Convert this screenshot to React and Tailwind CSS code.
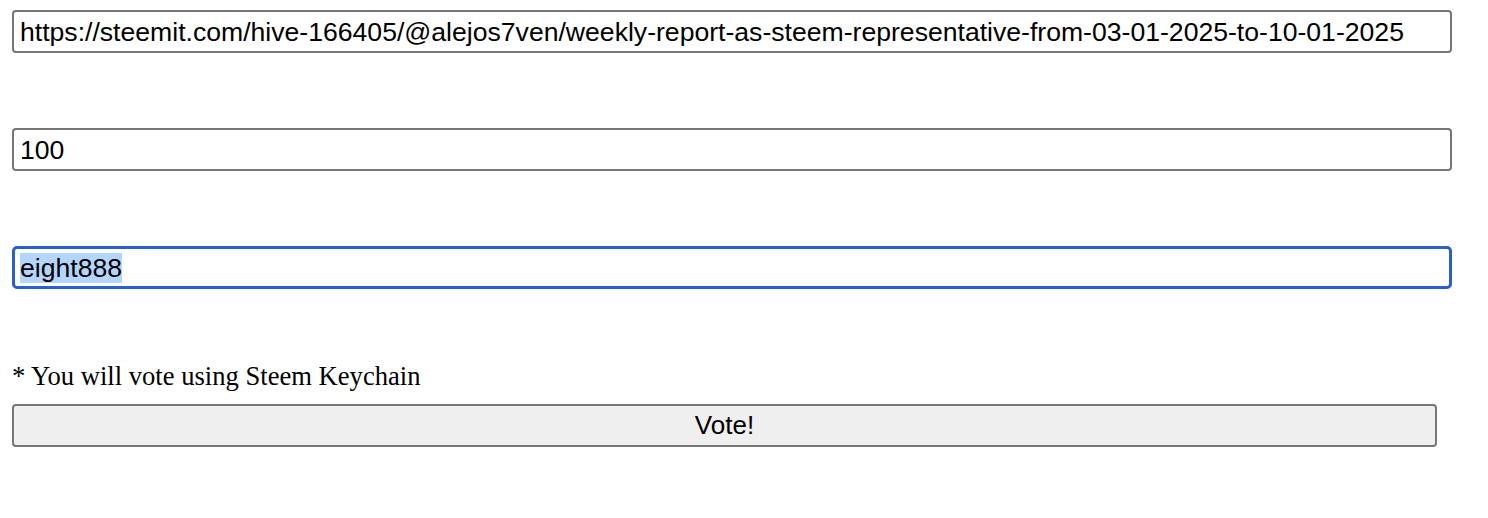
import React from "react";

export default function App() {
  return (
    <div className="min-h-[518px] bg-white pl-[12px] pt-[10px] font-['Liberation_Sans',Arial,sans-serif] text-black">
      {/* Post URL */}
      <div className="flex h-[43px] w-[1440px] items-center rounded-[4px] border-2 border-[#767676] px-[6px] text-[26.6px] leading-[30px]">
        https://steemit.com/hive-166405/@alejos7ven/weekly-report-as-steem-representative-from-03-01-2025-to-10-01-2025
      </div>

      {/* Weight */}
      <div className="mt-[75px] flex h-[43px] w-[1440px] items-center rounded-[4px] border-2 border-[#767676] px-[6px] text-[26.6px] leading-[30px]">
        100
      </div>

      {/* Voter (focused, selected) */}
      <div className="mt-[75px] flex h-[43px] w-[1440px] items-center rounded-[5px] border-[3px] border-[#2a5fcc] px-[5px] text-[26.6px]">
        <span className="bg-[#b4d5fe] leading-[30px]">eight888</span>
      </div>

      <p className="mt-[72px] font-['Liberation_Serif','Times_New_Roman',serif] text-[26.6px] leading-[30px]">
        * You will vote using Steem Keychain
      </p>

      <button className="mt-[13px] flex h-[43px] w-[1425px] items-center justify-center rounded-[4px] border-2 border-[#767676] bg-[#efefef] text-[26px]">
        Vote!
      </button>
    </div>
  );
}
